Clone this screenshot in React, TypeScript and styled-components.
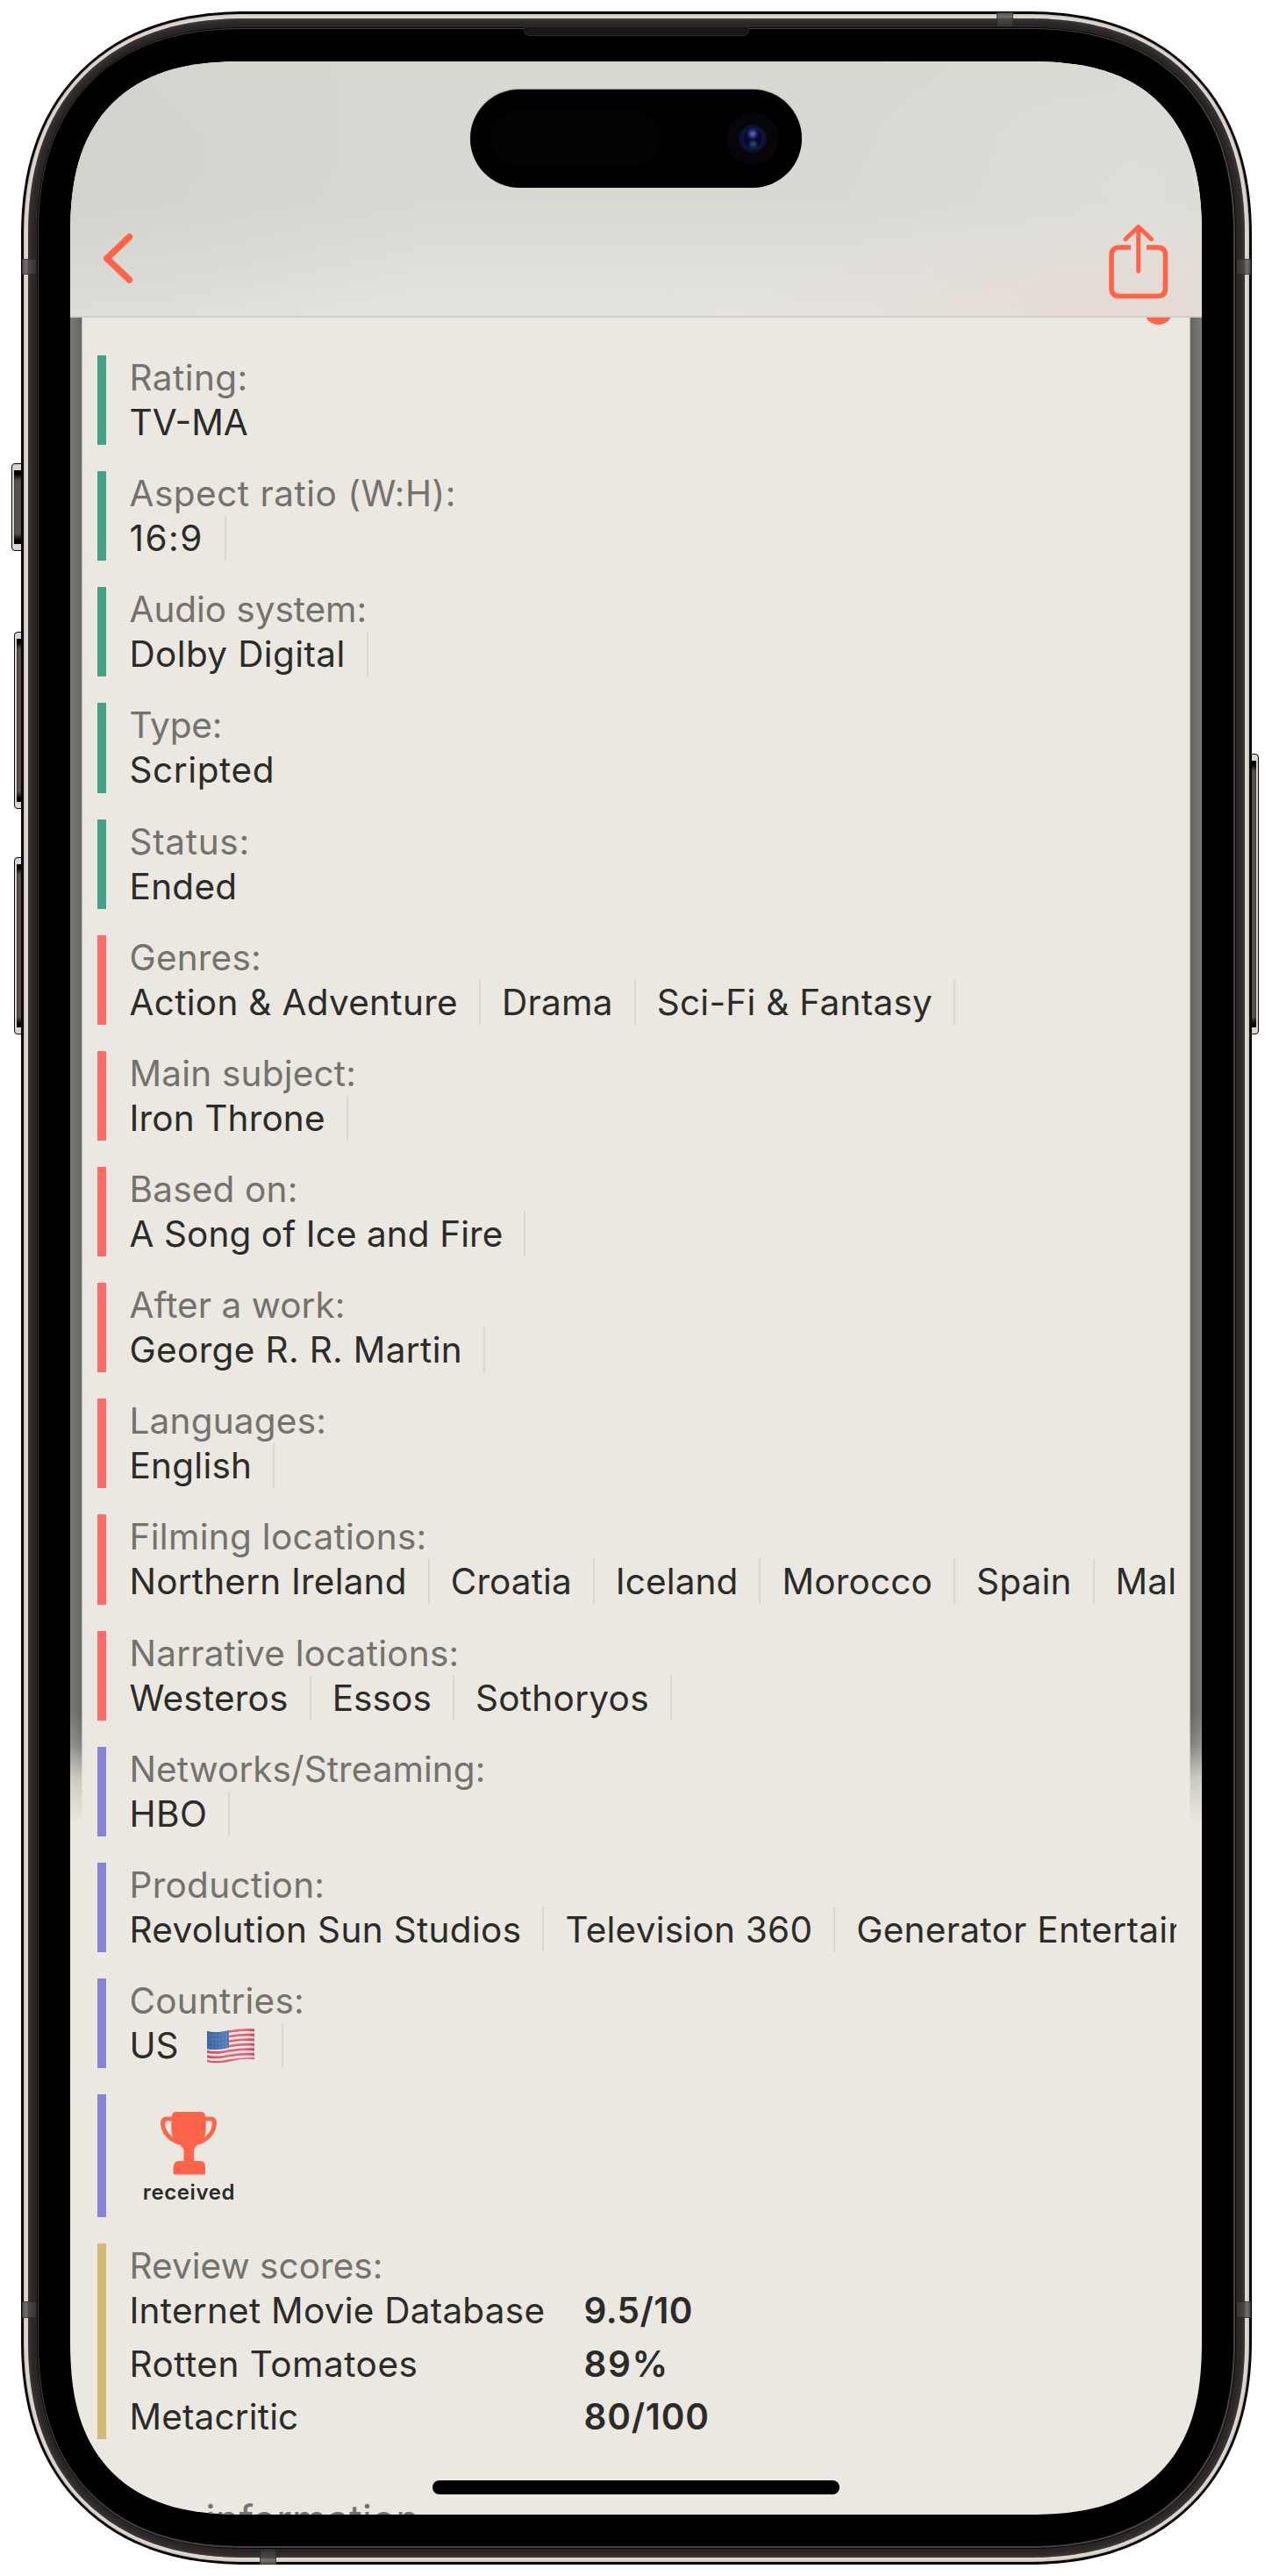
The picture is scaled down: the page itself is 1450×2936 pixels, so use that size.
import React from "react";
import styled, { createGlobalStyle, css } from "styled-components";

const GlobalStyle = createGlobalStyle`
  body { margin: 0; background: #fff; }
  * { box-sizing: border-box; }
`;

const ACCENT = "#ff644a";

const squircle = (radius: number, fallback: number, k: number) => css`
  border-radius: ${fallback}px;
  @supports (corner-shape: superellipse(1.2)) {
    border-radius: ${radius}px;
    corner-shape: superellipse(${k});
  }
`;

/* ---------- Device ---------- */

const Stage = styled.div`
  width: 1450px;
  height: 2936px;
  padding: 13px 23.5px 13px 24px;
  background: #fff;
  overflow: hidden;
  font-family: Inter, "Liberation Sans", sans-serif;
`;

const Device = styled.div`
  position: relative;
  width: 1402.5px;
  height: 2909.5px;
`;

const OuterRim = styled.div`
  position: relative;
  height: 100%;
  padding: 2.5px;
  background: #0a0706;
  ${squircle(256, 232, 1.176)}
`;

const SteelBand = styled.div`
  height: 100%;
  padding: 5.5px;
  background: #ddd5cf;
  box-shadow: inset 0 0 2px #8d837c;
  ${squircle(253.5, 229, 1.183)}
`;

const DarkBand = styled.div`
  height: 100%;
  padding: 9.5px;
  background: #2b2625;
  box-shadow: inset 0 0 7px #544d49;
  ${squircle(248, 224, 1.199)}
`;

const Seam = styled.div`
  height: 100%;
  padding: 1.5px;
  background: #050505;
  ${squircle(238.5, 214, 1.226)}
`;

const Hairline = styled.div`
  height: 100%;
  padding: 1.3px;
  background: #424242;
  ${squircle(237, 212, 1.231)}
`;

const Bezel = styled.div`
  height: 100%;
  padding: 36.7px 35.4px 36px 35.7px;
  background: #000;
  ${squircle(235.7, 211, 1.234)}
`;

const Screen = styled.div`
  position: relative;
  width: 1290px;
  height: 2796px;
  background: #ebe8e1;
  overflow: hidden;
  display: flex;
  flex-direction: column;
  ${squircle(200, 170, 1.337)}
`;

const Earpiece = styled.div`
  position: absolute;
  left: 572.5px;
  top: 18px;
  width: 257px;
  height: 10px;
  background: #171717;
  border: solid #2c2c2c;
  border-width: 0 1px 1px;
  border-radius: 0 0 7px 7px;
`;

const Antenna = styled.div<{ $x: number; $y: number; $vertical?: boolean; $flip?: boolean }>`
  position: absolute;
  left: ${(p) => p.$x}px;
  top: ${(p) => p.$y}px;
  width: ${(p) => (p.$vertical ? 18.5 : 17)}px;
  height: ${(p) => (p.$vertical ? 17.5 : 18.5)}px;
  background: linear-gradient(
    ${(p) => (p.$vertical ? (p.$flip ? 0 : 180) : p.$flip ? 270 : 90)}deg,
    #4d4b4a,
    #767270 30%,
    #4a4746 45%,
    #343130
  );
  box-shadow: inset 0 0 0 1px rgba(20, 18, 17, 0.45);
`;

const SideButton = styled.div<{ $side: "left" | "right"; $top: number; $height: number; $width: number }>`
  position: absolute;
  ${(p) => p.$side}: -${(p) => p.$width - 2}px;
  top: ${(p) => p.$top}px;
  width: ${(p) => p.$width}px;
  height: ${(p) => p.$height}px;
  padding: ${(p) => (p.$side === "left" ? "7px 0 7px 2px" : "7px 2px 7px 0")};
  background: #ddd5cc;
  border: 1.5px solid #0b0908;
  border-radius: ${(p) => (p.$side === "left" ? "4px 0 0 4px" : "0 4px 4px 0")};
`;

const ButtonFace = styled.div`
  height: 100%;
  background: linear-gradient(#000, #000 4px, #575250 12px, #575250 calc(100% - 12px), #000 calc(100% - 4px));
  box-shadow: inset 0 0 2px #000;
`;

/* ---------- Navigation bar ---------- */

const NavBar = styled.header`
  position: relative;
  z-index: 2;
  flex: none;
  height: 292px;
  padding: 180px 36px 0 37px;
  display: flex;
  justify-content: space-between;
  align-items: flex-start;
  border-bottom: 2px solid #cfcdc9;
  background:
    radial-gradient(ellipse 520px 120px at 96% 100%, rgba(231, 215, 210, 0.75), rgba(231, 215, 210, 0)),
    radial-gradient(ellipse 420px 300px at 0 45%, rgba(205, 205, 200, 0.5), rgba(205, 205, 200, 0)),
    radial-gradient(ellipse 340px 280px at 94% 50%, rgba(224, 224, 219, 0.7), rgba(224, 224, 219, 0)),
    linear-gradient(#d8d8d3, #d9d9d4 55%, #e4e4df);
`;

const BackButton = styled.button`
  border: 0;
  padding: 13px 0 0;
  background: none;
  svg { display: block; }
`;

const ShareButton = styled(BackButton)`
  padding: 4px 0 0;
`;

const Island = styled.div`
  position: absolute;
  left: 456px;
  top: 32px;
  width: 378px;
  height: 112px;
  padding: 0 26px 0 23px;
  border-radius: 56px;
  background: #000;
  box-shadow: 0 -1px 1px rgba(60, 65, 60, 0.35);
  display: flex;
  align-items: center;
  justify-content: space-between;
`;

const Sensor = styled.div`
  width: 194px;
  height: 65px;
  border-radius: 33px;
  background: #030303;
`;

const Camera = styled.div`
  width: 60px;
  height: 60px;
  border-radius: 50%;
  background: #070509;
  display: flex;
  align-items: center;
  justify-content: center;
`;

const Lens = styled.div`
  width: 32px;
  height: 32px;
  border-radius: 50%;
  border: 2px solid #101126;
  background:
    radial-gradient(circle at 50% 31%, #6a6fc4 0, #3a3f96 12%, rgba(20, 22, 90, 0) 28%),
    radial-gradient(circle at 52% 72%, #1d5a62 0, #143a4a 10%, rgba(20, 22, 70, 0) 24%),
    radial-gradient(circle, #050722 0, #070930 50%, #12174e 62%, #0a0c28 72%);
`;

/* ---------- Content ---------- */

const Dot = styled.div`
  position: absolute;
  z-index: 1;
  left: 1224px;
  top: 267px;
  width: 33px;
  height: 33px;
  border-radius: 50%;
  background: ${ACCENT};
`;

const EdgeShade = styled.div<{ $side: "left" | "right" }>`
  position: absolute;
  ${(p) => p.$side}: 0;
  top: 292px;
  width: 14px;
  height: 1720px;
  background: linear-gradient(
    to ${(p) => (p.$side === "left" ? "right" : "left")},
    #7a7b78,
    #696b67 70%,
    #63655f 88%,
    #cfcdc7
  );
  mask-image: linear-gradient(#000 0, #000 1590px, rgba(0, 0, 0, 0.78) 1627px, rgba(0, 0, 0, 0.25) 1665px, transparent 1715px);
`;

const List = styled.main`
  flex: none;
  padding: 43px 29px 0 31px;
  display: flex;
  flex-direction: column;
  gap: 30px;
`;

const Row = styled.section<{ $color: string; $height: number }>`
  display: flex;
  height: ${(p) => p.$height}px;
  border-left: 10px solid ${(p) => p.$color};
  padding-left: 26.5px;
  overflow: hidden;
`;

const RowBody = styled.div`
  min-width: 0;
  flex: 1;
`;

const Label = styled.div<{ $track?: number }>`
  height: 51px;
  line-height: 51px;
  font-size: 40.5px;
  color: #73726e;
  letter-spacing: ${(p) => p.$track ?? 0.2}px;
  white-space: nowrap;
`;

const Values = styled.div`
  display: flex;
  height: 51px;
  overflow: hidden;
`;

const Value = styled.div<{ $divided?: boolean; $track: number }>`
  display: flex;
  align-items: center;
  flex: none;
  line-height: 51px;
  font-size: 40.5px;
  color: #2b2b2a;
  letter-spacing: ${(p) => p.$track}px;
  white-space: nowrap;
  ${(p) =>
    p.$divided &&
    css`
      padding-right: 24px;
      margin-right: 24px;
      border-right: 2px solid #d9d6cf;
    `}
`;

const FlagBox = styled.span`
  display: flex;
  padding: 0 6px 0 31px;
`;

const Award = styled.div`
  width: 136px;
  height: 100%;
  padding-top: 19px;
  display: flex;
  flex-direction: column;
  align-items: center;
`;

const AwardText = styled.span`
  margin-top: 1px;
  font-size: 24px;
  line-height: 38px;
  font-weight: 600;
  color: #2b2b2a;
  letter-spacing: 0.6px;
`;

const Scores = styled.div`
  display: grid;
  grid-template-columns: 518px auto;
  row-gap: 9.2px;
  font-size: 40.5px;
  line-height: 51px;
  color: #2b2b2a;
`;

const Source = styled.span<{ $track: number }>`
  letter-spacing: ${(p) => p.$track}px;
`;

const Score = styled.strong<{ $track: number }>`
  font-weight: 600;
  letter-spacing: ${(p) => p.$track}px;
`;

const NextHeading = styled(Label)`
  flex: none;
  padding: 0 62px;
  margin-top: 66px;
  font-size: 45px;
`;

const HomeIndicator = styled.div`
  position: absolute;
  left: 413px;
  bottom: 23px;
  width: 464px;
  height: 16px;
  border-radius: 8px;
  background: #000;
`;

const GREEN = "#45a088";
const RED = "#ff6b68";
const BLUE = "#8684d6";
const GOLD = "#d3b974";

type Item = { text: string; track?: number; flag?: boolean };
type Fact = { label: string; track?: number; color: string; plain?: boolean; items: Item[] };

const facts: Fact[] = [
  { label: "Rating:", track: 0.45, color: GREEN, plain: true, items: [{ text: "TV-MA", track: 0 }] },
  { label: "Aspect ratio (W:H):", track: 0.5, color: GREEN, items: [{ text: "16:9", track: 1.5 }] },
  { label: "Audio system:", track: -0.05, color: GREEN, items: [{ text: "Dolby Digital", track: 0.38 }] },
  { label: "Type:", track: -0.1, color: GREEN, plain: true, items: [{ text: "Scripted", track: 0.6 }] },
  { label: "Status:", track: 0.7, color: GREEN, plain: true, items: [{ text: "Ended", track: 0.3 }] },
  {
    label: "Genres:",
    color: RED,
    items: [
      { text: "Action & Adventure", track: 0.3 },
      { text: "Drama", track: 0.25 },
      { text: "Sci-Fi & Fantasy", track: 0.28 },
    ],
  },
  { label: "Main subject:", color: RED, items: [{ text: "Iron Throne", track: 0.15 }] },
  { label: "Based on:", color: RED, items: [{ text: "A Song of Ice and Fire", track: 0.08 }] },
  { label: "After a work:", track: 0.05, color: RED, items: [{ text: "George R. R. Martin", track: 0.35 }] },
  { label: "Languages:", color: RED, items: [{ text: "English", track: 0.25 }] },
  {
    label: "Filming locations:",
    track: 0.3,
    color: RED,
    items: [
      { text: "Northern Ireland", track: 0.2 },
      { text: "Croatia", track: 0.1 },
      { text: "Iceland", track: 0.1 },
      { text: "Morocco", track: 0.2 },
      { text: "Spain", track: 0.15 },
      { text: "Malta", track: 0.2 },
    ],
  },
  {
    label: "Narrative locations:",
    color: RED,
    items: [
      { text: "Westeros", track: 0.2 },
      { text: "Essos", track: 0.1 },
      { text: "Sothoryos", track: 0.3 },
    ],
  },
  { label: "Networks/Streaming:", track: 0.05, color: BLUE, items: [{ text: "HBO", track: 0.4 }] },
  {
    label: "Production:",
    track: 0.3,
    color: BLUE,
    items: [
      { text: "Revolution Sun Studios", track: 0.33 },
      { text: "Television 360", track: 0.25 },
      { text: "Generator Entertainment", track: 0.3 },
    ],
  },
  { label: "Countries:", color: BLUE, items: [{ text: "US", flag: true }] },
];

const scores = [
  { source: "Internet Movie Database", track: 0.25, score: "9.5/10", scoreTrack: 0.4 },
  { source: "Rotten Tomatoes", track: 0.5, score: "89%", scoreTrack: 1.6 },
  { source: "Metacritic", track: 0.15, score: "80/100", scoreTrack: 0.8 },
];

const Chevron = () => (
  <svg width="36" height="60" viewBox="0 0 36 60" fill="none" stroke={ACCENT} strokeWidth="7.4" strokeLinecap="round" strokeLinejoin="round">
    <path d="M30.500 7 L4.800 31.500 L30.500 56" />
  </svg>
);

const ShareIcon = () => (
  <svg width="72" height="90" viewBox="0 0 72 90" fill="none" stroke={ACCENT} strokeWidth="5.6">
    <path d="M27 28 H14 Q5 28 5 37 V74.500 Q5 83.500 14 83.500 H57.500 Q66.500 83.500 66.500 74.500 V37 Q66.500 28 57.500 28 H45" />
    <path d="M35.750 5 V55 M21 18.500 L35.750 4.500 L50.500 18.500" strokeWidth="5" strokeLinecap="round" strokeLinejoin="round" />
  </svg>
);

const Trophy = () => (
  <svg width="64" height="73" viewBox="0 0 64 73">
    <path
      fill={ACCENT}
      d="M13 6 Q13 1 18 1 H46 Q51 1 51 6 Q54 31 45 36.500 Q38 41 38 45 V57 H46 Q51 58 51 64 V71 Q51 72.500 49 72.500 H16.500 Q14.500 72.500 14.500 71 V64 Q15 58 20 57 H26.500 V45 Q26 41 19 36.500 Q10 31 13 6Z"
    />
    <path fill="none" stroke={ACCENT} strokeWidth="5" d="M14 9 H6.500 Q2.500 9 2.500 14 C3 25 12 34 22 36 M50 9 H57.500 Q61.500 9 61.500 14 C61 25 52 34 42 36" />
  </svg>
);

const stripeShade = (i: number) => (i % 2 ? "#f1e4e6" : "#dc5266");

const Flag = () => (
  <svg width="56" height="42" viewBox="0 0 56 42">
    <defs>
      <clipPath id="wave">
        <path d="M1 5 C19 9 30 -1 55 2 V37 C35 34 22 45 1 40Z" />
      </clipPath>
      <linearGradient id="fold" x1="0" x2="1">
        <stop offset="0" stopColor="#000" stopOpacity="0.08" />
        <stop offset="0.35" stopColor="#fff" stopOpacity="0.1" />
        <stop offset="0.75" stopColor="#fff" stopOpacity="0.12" />
        <stop offset="1" stopColor="#000" stopOpacity="0.16" />
      </linearGradient>
    </defs>
    <g clipPath="url(#wave)">
      {Array.from({ length: 13 }, (_, i) => (
        <path
          key={i}
          d="M0 0 C19 5 30 -5 56 -2"
          transform={`translate(0 ${6.2 + i * 2.75})`}
          fill="none"
          stroke={stripeShade(i)}
          strokeWidth="3"
        />
      ))}
      <path d="M0 4 C12 7 18 6 26 4 V24 C18 26 10 27 0 25Z" fill="#3f6dac" />
      {Array.from({ length: 4 }, (_, r) => (
        <path key={r} d="M3 0 C11 2 17 1 24 -1" transform={`translate(0 ${9 + r * 4.5})`} fill="none" stroke="#7f9fca" strokeWidth="1" strokeDasharray="1 3" />
      ))}
      <path d="M0 0 H56 V42 H0Z" fill="url(#fold)" />
    </g>
  </svg>
);

const App = () => (
  <>
    <GlobalStyle />
    <Stage>
      <Device>
        <SideButton $side="left" $top={514.5} $height={100} $width={13}><ButtonFace /></SideButton>
        <SideButton $side="left" $top={706.5} $height={202} $width={10}><ButtonFace /></SideButton>
        <SideButton $side="left" $top={963.5} $height={202} $width={10}><ButtonFace /></SideButton>
        <SideButton $side="right" $top={846} $height={320} $width={10}><ButtonFace /></SideButton>
        <OuterRim>
          <SteelBand>
            <DarkBand>
              <Seam>
                <Hairline>
                  <Bezel>
                    <Screen>
                      <NavBar>
                        <BackButton aria-label="Back"><Chevron /></BackButton>
                        <ShareButton aria-label="Share"><ShareIcon /></ShareButton>
                        <Island>
                          <Sensor />
                          <Camera><Lens /></Camera>
                        </Island>
                      </NavBar>
                      <EdgeShade $side="left" />
                      <EdgeShade $side="right" />
                      <Dot />
                      <List>
                        {facts.map((fact) => (
                          <Row key={fact.label} $color={fact.color} $height={102.15}>
                            <RowBody>
                              <Label $track={fact.track}>{fact.label}</Label>
                              <Values>
                                {fact.items.map((item) => (
                                  <Value key={item.text} $divided={!fact.plain} $track={item.track ?? 0}>
                                    {item.text}
                                    {item.flag && <FlagBox><Flag /></FlagBox>}
                                  </Value>
                                ))}
                              </Values>
                            </RowBody>
                          </Row>
                        ))}
                        <Row $color={BLUE} $height={140.3}>
                          <Award>
                            <Trophy />
                            <AwardText>received</AwardText>
                          </Award>
                        </Row>
                        <Row $color={GOLD} $height={222.5}>
                          <RowBody>
                            <Label $track={0.05}>Review scores:</Label>
                            <Scores>
                              {scores.map((s) => (
                                <React.Fragment key={s.source}>
                                  <Source $track={s.track}>{s.source}</Source>
                                  <Score $track={s.scoreTrack}>{s.score}</Score>
                                </React.Fragment>
                              ))}
                            </Scores>
                          </RowBody>
                        </Row>
                      </List>
                      <NextHeading>Key information</NextHeading>
                      <HomeIndicator />
                    </Screen>
                  </Bezel>
                </Hairline>
              </Seam>
            </DarkBand>
          </SteelBand>
        </OuterRim>
        <Earpiece />
        <Antenna $x={1112} $y={0.5} $vertical />
        <Antenna $x={272} $y={2892} $vertical $flip />
        <Antenna $x={1} $y={281.5} />
        <Antenna $x={1} $y={2610} />
        <Antenna $x={1385} $y={281.5} $flip />
        <Antenna $x={1385} $y={2610} $flip />
      </Device>
    </Stage>
  </>
);

export default App;
